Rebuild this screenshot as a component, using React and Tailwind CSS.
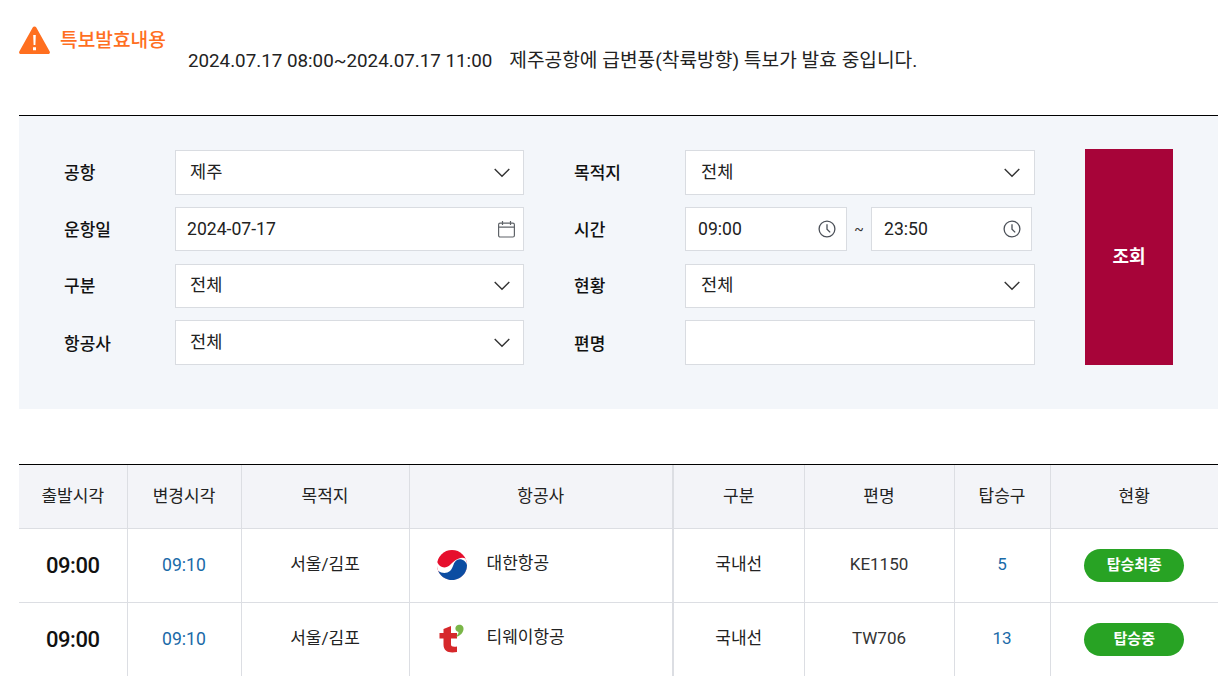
import React from "react";

const Chevron = () => (
  <svg width="16" height="10" viewBox="0 0 16 10" fill="none" stroke="#333" strokeWidth="1.4">
    <path d="M0.7 1l7.3 7.3L15.3 1" />
  </svg>
);

const Calendar = () => (
  <svg width="18" height="18" viewBox="0 0 18 18" fill="none" stroke="#5f6368" strokeWidth="1.2">
    <rect x="1.6" y="3.2" width="15.8" height="13.8" rx="1.5" />
    <path d="M1.6 7.2h15.8M5.5 1v4M13.5 1v4" />
  </svg>
);

const Clock = () => (
  <svg width="18" height="18" viewBox="0 0 18 18" fill="none" stroke="#4b5058" strokeWidth="1.3">
    <circle cx="9" cy="9" r="7.9" />
    <path d="M9 4.2v5l3.2 3.2" />
  </svg>
);

const Select = ({ value, wide }) => (
  <div className={`${wide ? "w-[350px] pl-[15px] pr-[14px]" : "w-[349px] pl-[14px] pr-[13px]"} h-full bg-white border border-[#d9dce1] flex items-center justify-between text-[17.6px] text-[#222]`}>
    <span className="-mt-[1px]">{value}</span>
    <Chevron />
  </div>
);

const Label = ({ children, pt = "pt-[3px]" }) => (
  <div className={`w-[111px] text-[17px] font-medium text-[#111] ${pt}`}>{children}</div>
);

const TimeBox = ({ value, w }) => (
  <div className={`${w} h-full bg-white border border-[#d9dce1] flex items-center justify-between pl-[12px] pr-[10px] text-[17.6px] text-[#222]`}>
    <span>{value}</span>
    <Clock />
  </div>
);

const KoreanAir = () => (
  <svg width="30" height="30" viewBox="0 0 30 30">
    <circle cx="15" cy="15" r="15" fill="#e60f2d" />
    <path d="M0.3 12C2 18 9 19 13 15C17 11 23 6 28.5 8.5A15 15 0 1 1 0.3 12Z" fill="#fff" />
    <path d="M30 15.5C29.5 11 24 8 20 10C16 12 16.5 18 13 21C10 23.5 5 23.5 1.2 21A15 15 0 0 0 30 15.5Z" fill="#0c4da2" />
  </svg>
);

const Tway = () => (
  <svg width="25" height="29" viewBox="0 0 25 29" className="ml-[2px] -mt-[2px]">
    <path d="M4.5 5L12 2V9H18V14.5H12V20.5C12 22.5 14 23 18 22.5V28C10 29.5 4.5 27.5 4.5 20.5V14.500H0.5V9H4.5Z" fill="#d6282b" />
    <path d="M19 1C22 0 25 2 24.5 5.5C24 9 21 12 17 13C18.5 11 19.5 9.5 19.5 8C17 7.5 16 5.5 16.5 3.5C17 2 18 1.3 19 1Z" fill="#7ab648" />
  </svg>
);

const rows = [
  { dep: "09:00", chg: "09:10", dest: "서울/김포", logo: <KoreanAir />, air: "대한항공", type: "국내선", no: "KE1150", gate: "5", status: "탑승최종" },
  { dep: "09:00", chg: "09:10", dest: "서울/김포", logo: <Tway />, air: "티웨이항공", type: "국내선", no: "TW706", gate: "13", status: "탑승중" },
];

const heads = ["출발시각", "변경시각", "목적지", "항공사", "구분", "편명", "탑승구", "현황"];
const widths = ["w-[108px]", "w-[114px]", "w-[168px]", "w-[264px]", "w-[131px]", "w-[150px]", "w-[96px]", "w-[168px]"];

export default function App() {
  return (
    <div className="w-[1228px] h-[676px] overflow-hidden bg-white pl-[19px] pr-[10px] font-['Roboto','Noto_Sans_CJK_KR',sans-serif]">
      <div className="h-[115px] flex items-start pt-[26px]">
        <svg width="31" height="28" viewBox="0 0 31 28" className="shrink-0">
          <path d="M15.5 0.5c.8 0 1.4.4 1.8 1.1l13.4 24c.6 1.1-.1 2.4-1.4 2.4H1.7C.4 28-.3 26.7.3 25.6l13.4-24c.4-.7 1-1.1 1.8-1.1z" fill="#ff6f1f" />
          <path d="M14.2 9h2.6l-.4 10h-1.8zM14 21.2h3v3h-3z" fill="#fff" />
        </svg>
        <div className="ml-[10px] mt-[2px] text-[19.2px] leading-[26px] font-medium text-[#ff6f1f]">특보발효내용</div>
        <div className="ml-[22px] mt-[22px] leading-[26px] text-[#222] whitespace-nowrap flex">
          <span className="text-[18.8px]">2024.07.17 08:00~2024.07.17 11:00</span>
          <span className="text-[19.2px] ml-[17px]">제주공항에 급변풍(착륙방향) 특보가 발효 중입니다.</span>
        </div>
      </div>

      <div className="h-[294px] border-t border-black bg-[#f3f6fa] pl-[45px] pt-[33px] flex">
        <div className="w-[1021px] flex flex-col gap-[12px] pt-[1px]">
          <div className="h-[45px] flex items-center">
            <Label>공항</Label>
            <Select value="제주" />
            <div className="w-[50px]" />
            <Label>목적지</Label>
            <Select value="전체" wide />
          </div>
          <div className="h-[44px] flex items-center">
            <Label>운항일</Label>
            <div className="w-[349px] h-full bg-white border border-[#d9dce1] flex items-center justify-between pl-[11px] pr-[8px] text-[17.6px] text-[#222]">
              <span>2024-07-17</span>
              <Calendar />
            </div>
            <div className="w-[50px]" />
            <Label>시간</Label>
            <TimeBox value="09:00" w="w-[162px]" />
            <div className="w-[24px] text-center text-[14px] text-[#333]">~</div>
            <TimeBox value="23:50" w="w-[161px]" />
          </div>
          <div className="h-[44px] mt-[1px] flex items-center">
            <Label pt="pt-[1px]">구분</Label>
            <Select value="전체" />
            <div className="w-[50px]" />
            <Label pt="pt-[1px]">현황</Label>
            <Select value="전체" wide />
          </div>
          <div className="h-[45px] flex items-center">
            <Label pt="pt-[5px]">항공사</Label>
            <Select value="전체" />
            <div className="w-[50px]" />
            <Label pt="pt-[5px]">편명</Label>
            <div className="w-[350px] h-full bg-white border border-[#d9dce1]" />
          </div>
        </div>
        <button className="w-[88px] h-[216px] pb-[2px] bg-[#a70439] text-white text-[18px] font-bold">조회</button>
      </div>

      <div className="mt-[55px] border-t border-black w-[1199px]">
        <table className="w-full table-fixed border-collapse text-[#222]">
          <thead>
            <tr className="h-[63px] bg-[#f3f4f8] border-b border-[#dcdee3]">
              {heads.map((h, i) => (
                <th
                  key={h}
                  className={`${widths[i]} font-normal text-[17px] text-[#222] ${i === 3 ? "border-r-2" : i === 7 ? "" : "border-r"} border-[#dcdee3]`}
                >
                  {h}
                </th>
              ))}
            </tr>
          </thead>
          <tbody>
            {rows.map((r) => (
              <tr key={r.no} className="h-[74px] border-b border-[#dcdee3] text-[17px]">
                <td className="border-r border-[#dcdee3] text-center text-[22px] tracking-[-0.5px] font-medium text-[#111]">{r.dep}</td>
                <td className="border-r border-[#dcdee3] text-center text-[17.6px] text-[#1a6aa8]">{r.chg}</td>
                <td className="border-r border-[#dcdee3] text-center">{r.dest}</td>
                <td className="border-r-2 border-[#dcdee3]">
                  <div className="flex items-center">
                    <div className="w-[77px] pl-[27px] flex items-center">{r.logo}</div>
                    <span className="-mt-[3px]">{r.air}</span>
                  </div>
                </td>
                <td className="border-r border-[#dcdee3] text-center">{r.type}</td>
                <td className="border-r border-[#dcdee3] text-center text-[#333]">{r.no}</td>
                <td className="border-r border-[#dcdee3] text-center text-[#1a6aa8]">{r.gate}</td>
                <td className="text-center">
                  <span className="inline-flex items-center justify-center w-[100px] h-[33px] rounded-full bg-[#28a324] text-white text-[15px] font-bold">{r.status}</span>
                </td>
              </tr>
            ))}
          </tbody>
        </table>
      </div>
    </div>
  );
}
